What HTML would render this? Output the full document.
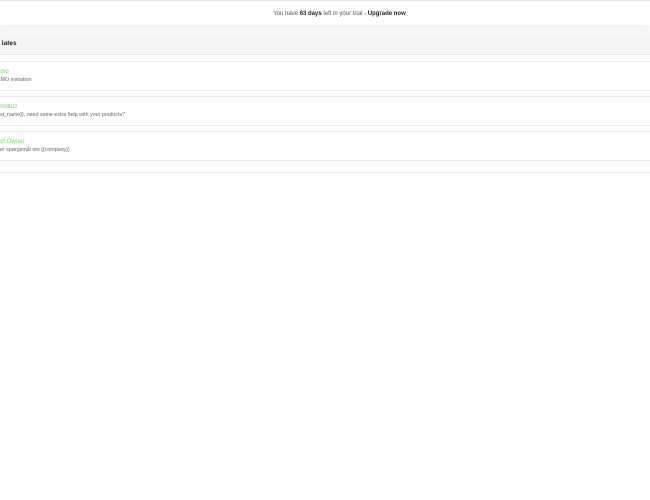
<html><head><style>
body{margin:0;width:650px;height:500px;background:#fff;font-family:"Liberation Sans",sans-serif;overflow:hidden;position:relative}
.top{position:absolute;left:0;top:0;width:650px;height:25px;box-sizing:border-box;padding-left:29px;background:#fff;border-top:1px solid #e6e6e6;box-shadow:0 1px 3px rgba(0,0,0,.08);font-size:6px;color:#555;text-align:center;line-height:26px}
.top b{color:#222}
.band{position:absolute;left:0;top:26px;width:650px;height:10px;background:#f6f7f8}
.hdr{position:absolute;left:0;top:36px;width:650px;height:18px;background:#f5f5f5;border-bottom:1px solid #e4e4e4;font-size:6.5px;font-weight:bold;color:#222;line-height:16px}
.row{position:absolute;left:0;width:650px;height:28px;border-top:1px solid #e8e8e8;border-bottom:1px solid #e8e8e8}
.t{position:absolute;left:-3px;top:7px;font-size:6px;color:#74cf6a;white-space:nowrap}
.s{position:absolute;left:-3px;top:15px;font-size:5.3px;color:#666;white-space:nowrap}
</style></head><body>
<div class="top">You have <b>63 days</b> left in your trial - <b>Upgrade now</b></div>
<div class="band"></div>
<div class="hdr">&nbsp;lates</div>
<div class="row" style="top:61px"><div class="t">emo</div><div class="s">EMO invitation</div></div>
<div class="row" style="top:96px"><div class="t">product</div><div class="s">irst_name}}, need some extra help with your products?</div></div>
<div class="row" style="top:131px"><div class="t">uct Owner</div><div class="s">per spørgsmål om {{company}}</div></div>
<div style="position:absolute;left:0;top:172px;width:650px;height:1px;background:#e8e8e8"></div>
</body></html>
